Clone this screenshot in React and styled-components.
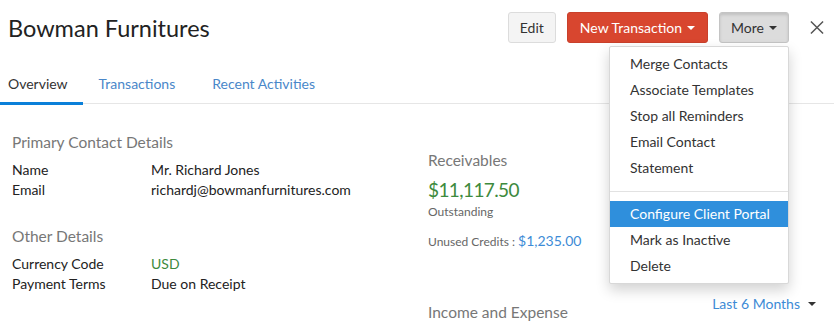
import styled, { createGlobalStyle } from "styled-components";

const GlobalStyle = createGlobalStyle`
  body {
    margin: 0;
    background: #fff;
    font-family: Lato, "Open Sans", sans-serif;
    color: #222;
  }
`;

const Page = styled.div`
  width: 834px;
  height: 323px;
  overflow: hidden;
  position: relative;
`;

const Header = styled.div`
  display: flex;
  align-items: center;
  padding: 12px 10px 0 8px;
  height: 31px;
`;

const Title = styled.h1`
  flex: 1;
  margin: 0;
  font-size: 23.5px;
  font-weight: 400;
  color: #222;
`;

const Actions = styled.div`
  display: flex;
  align-items: center;
  gap: 11px;
`;

const Button = styled.button`
  height: 31px;
  padding: 0 ${(p) => p.$pad || 12}px;
  border-radius: 3px;
  font-family: inherit;
  font-size: 14px;
  display: flex;
  align-items: center;
  gap: 5px;
  cursor: pointer;
  border: 1px solid ${(p) => (p.$primary ? "#c9402b" : p.$active ? "#c4c4c4" : "#dcdcdc")};
  background: ${(p) => (p.$primary ? "#d8462f" : p.$active ? "#dcdcdc" : "#f4f4f4")};
  color: ${(p) => (p.$primary ? "#fff" : "#333")};
  box-shadow: ${(p) => (p.$active ? "inset 0 2px 3px rgba(0,0,0,0.12)" : "none")};
`;

const Caret = styled.span`
  width: 0;
  height: 0;
  border-left: 4px solid transparent;
  border-right: 4px solid transparent;
  border-top: 4px solid ${(p) => p.$color || "#333"};
  margin-top: 1px;
`;

const MoreWrap = styled.div`
  position: relative;
`;

const Close = styled.span`
  margin-left: 10px;
  width: 14px;
  display: flex;
  justify-content: center;
`;

const Menu = styled.div`
  position: absolute;
  right: 0;
  top: 34px;
  width: 178px;
  background: #fff;
  border: 1px solid #d8d8d8;
  border-radius: 2px;
  box-shadow: 0 6px 14px rgba(0, 0, 0, 0.18);
  padding: 4px 0;
  z-index: 5;
`;

const MenuItem = styled.div`
  height: 26px;
  line-height: 26px;
  padding-left: 20px;
  font-size: 14px;
  color: ${(p) => (p.$active ? "#fff" : "#333")};
  background: ${(p) => (p.$active ? "#2f8fdc" : "transparent")};
`;

const Divider = styled.div`
  height: 1px;
  background: #e2e2e2;
  margin: 10px 0 9px;
`;

const Tabs = styled.div`
  display: flex;
  margin-top: 19px;
  border-bottom: 1px solid #e6e6e6;
`;

const Tab = styled.div`
  padding: 12px 15px 8px 8px;
  margin-right: ${(p) => p.$gap || 0}px;
  font-size: 14px;
  line-height: 20px;
  color: ${(p) => (p.$active ? "#333" : "#4a87c9")};
  border-bottom: 3px solid ${(p) => (p.$active ? "#0b80d9" : "transparent")};
  margin-bottom: -2px;
`;

const Body = styled.div`
  display: flex;
  padding: 28px 19px 0 12px;
`;

const Column = styled.div`
  width: ${(p) => p.$width || "auto"};
  flex: ${(p) => (p.$grow ? 1 : "none")};
  padding-top: ${(p) => p.$top || 0}px;
`;

const SectionTitle = styled.div`
  font-size: 15.5px;
  line-height: 20px;
  color: #777;
  margin-bottom: ${(p) => p.$mb || 8}px;
`;

const DetailGrid = styled.div`
  display: grid;
  grid-template-columns: 139px auto;
  font-size: 14px;
  line-height: 20px;
  margin-bottom: 26px;
`;

const Value = styled.span`
  color: ${(p) => p.$color || "#222"};
`;

const Amount = styled.div`
  font-size: 19px;
  line-height: 28px;
  letter-spacing: -0.6px;
  color: #3d8a3d;
`;

const Small = styled.div`
  font-size: 12px;
  line-height: 16px;
  color: #666;
  margin-bottom: ${(p) => p.$mb || 0}px;
`;

const Credit = styled.span`
  font-size: 14px;
  color: #3d8bd6;
`;

const BottomRow = styled.div`
  display: flex;
  justify-content: space-between;
  align-items: flex-start;
  margin-top: 52px;
`;

const Range = styled.div`
  display: flex;
  align-items: center;
  gap: 8px;
  font-size: 14px;
  color: #3d8bd6;
  margin-top: -7px;
  margin-right: -1px;
`;

export default function App() {
  const menu = [
    "Merge Contacts",
    "Associate Templates",
    "Stop all Reminders",
    "Email Contact",
    "Statement",
  ];
  return (
    <Page>
      <GlobalStyle />
      <Header>
        <Title>Bowman Furnitures</Title>
        <Actions>
          <Button $pad={11}>Edit</Button>
          <Button $primary $pad={12}>
            New Transaction <Caret $color="#fff" />
          </Button>
          <MoreWrap>
            <Button $active $pad={11}>
              More <Caret />
            </Button>
            <Menu>
              {menu.map((m) => (
                <MenuItem key={m}>{m}</MenuItem>
              ))}
              <Divider />
              <MenuItem $active>Configure Client Portal</MenuItem>
              <MenuItem>Mark as Inactive</MenuItem>
              <MenuItem>Delete</MenuItem>
            </Menu>
          </MoreWrap>
          <Close>
            <svg width="15" height="15" viewBox="0 0 15 15">
              <path d="M1 1 L14 14 M14 1 L1 14" stroke="#555" strokeWidth="1.6" />
            </svg>
          </Close>
        </Actions>
      </Header>

      <Tabs>
        <Tab $active $gap={8}>Overview</Tab>
        <Tab $gap={14}>Transactions</Tab>
        <Tab>Recent Activities</Tab>
      </Tabs>

      <Body>
        <Column $width="416px">
          <SectionTitle>Primary Contact Details</SectionTitle>
          <DetailGrid>
            <span>Name</span>
            <Value>Mr. Richard Jones</Value>
            <span>Email</span>
            <Value>richardj@bowmanfurnitures.com</Value>
          </DetailGrid>
          <SectionTitle>Other Details</SectionTitle>
          <DetailGrid>
            <span>Currency Code</span>
            <Value $color="#3d8a3d">USD</Value>
            <span>Payment Terms</span>
            <Value>Due on Receipt</Value>
          </DetailGrid>
        </Column>
        <Column $grow $top={18}>
          <SectionTitle $mb={6}>Receivables</SectionTitle>
          <Amount>$11,117.50</Amount>
          <Small $mb={13}>Outstanding</Small>
          <Small>
            Unused Credits : <Credit>$1,235.00</Credit>
          </Small>
          <BottomRow>
            <SectionTitle>Income and Expense</SectionTitle>
            <Range>
              Last 6 Months <Caret />
            </Range>
          </BottomRow>
        </Column>
      </Body>
    </Page>
  );
}
